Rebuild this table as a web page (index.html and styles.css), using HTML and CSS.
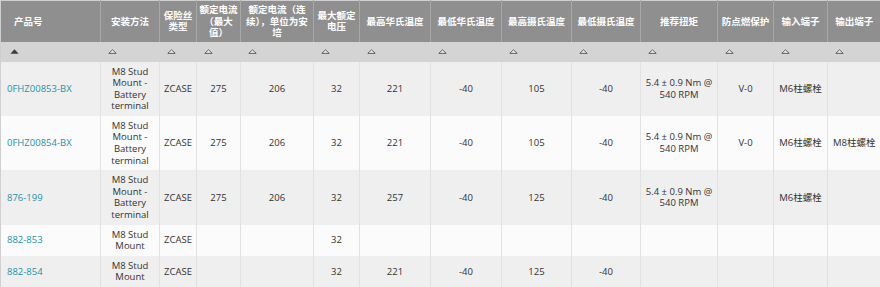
FILE: index.html
```html
<!DOCTYPE html>
<html lang="zh">
<head>
<meta charset="utf-8">
<title>产品表</title>
<link rel="stylesheet" href="styles.css">
</head>
<body>
<table class="grid">
  <colgroup>
    <col class="w100"><col class="w59"><col class="w37"><col class="w44"><col class="w73"><col class="w46"><col class="w71"><col class="w71"><col class="w70"><col class="w69"><col class="w77"><col class="w56"><col class="w54"><col class="w53">
  </colgroup>
  <thead>
    <tr class="head">
      <th class="first">产品号</th>
      <th>安装方法</th>
      <th>保险丝类型</th>
      <th>额定电流（最大值）</th>
      <th>额定电流（连续），单位为安培</th>
      <th>最大额定电压</th>
      <th>最高华氏温度</th>
      <th>最低华氏温度</th>
      <th>最高摄氏温度</th>
      <th>最低摄氏温度</th>
      <th>推荐扭矩</th>
      <th>防点燃保护</th>
      <th>输入端子</th>
      <th>输出端子</th>
    </tr>
    <tr class="sort">
      <td><svg class="arrow" width="9" height="5" viewBox="0 0 9 5"><path d="M4.5 0.3 L8.6 4.8 L0.4 4.8 Z" fill="#3c3c3c"/></svg></td>
      <td><svg class="arrow" width="9" height="5" viewBox="0 0 9 5"><path d="M4.5 0.8 L8.2 4.4 L0.8 4.4 Z" fill="#ececec" stroke="#505050" stroke-width="0.9"/></svg></td>
      <td><svg class="arrow" width="9" height="5" viewBox="0 0 9 5"><path d="M4.5 0.8 L8.2 4.4 L0.8 4.4 Z" fill="#ececec" stroke="#505050" stroke-width="0.9"/></svg></td>
      <td><svg class="arrow" width="9" height="5" viewBox="0 0 9 5"><path d="M4.5 0.8 L8.2 4.4 L0.8 4.4 Z" fill="#ececec" stroke="#505050" stroke-width="0.9"/></svg></td>
      <td><svg class="arrow" width="9" height="5" viewBox="0 0 9 5"><path d="M4.5 0.8 L8.2 4.4 L0.8 4.4 Z" fill="#ececec" stroke="#505050" stroke-width="0.9"/></svg></td>
      <td><svg class="arrow" width="9" height="5" viewBox="0 0 9 5"><path d="M4.5 0.8 L8.2 4.4 L0.8 4.4 Z" fill="#ececec" stroke="#505050" stroke-width="0.9"/></svg></td>
      <td><svg class="arrow" width="9" height="5" viewBox="0 0 9 5"><path d="M4.5 0.8 L8.2 4.4 L0.8 4.4 Z" fill="#ececec" stroke="#505050" stroke-width="0.9"/></svg></td>
      <td><svg class="arrow" width="9" height="5" viewBox="0 0 9 5"><path d="M4.5 0.8 L8.2 4.4 L0.8 4.4 Z" fill="#ececec" stroke="#505050" stroke-width="0.9"/></svg></td>
      <td><svg class="arrow" width="9" height="5" viewBox="0 0 9 5"><path d="M4.5 0.8 L8.2 4.4 L0.8 4.4 Z" fill="#ececec" stroke="#505050" stroke-width="0.9"/></svg></td>
      <td><svg class="arrow" width="9" height="5" viewBox="0 0 9 5"><path d="M4.5 0.8 L8.2 4.4 L0.8 4.4 Z" fill="#ececec" stroke="#505050" stroke-width="0.9"/></svg></td>
      <td><svg class="arrow" width="9" height="5" viewBox="0 0 9 5"><path d="M4.5 0.8 L8.2 4.4 L0.8 4.4 Z" fill="#ececec" stroke="#505050" stroke-width="0.9"/></svg></td>
      <td><svg class="arrow" width="9" height="5" viewBox="0 0 9 5"><path d="M4.5 0.8 L8.2 4.4 L0.8 4.4 Z" fill="#ececec" stroke="#505050" stroke-width="0.9"/></svg></td>
      <td><svg class="arrow" width="9" height="5" viewBox="0 0 9 5"><path d="M4.5 0.8 L8.2 4.4 L0.8 4.4 Z" fill="#ececec" stroke="#505050" stroke-width="0.9"/></svg></td>
      <td><svg class="arrow" width="9" height="5" viewBox="0 0 9 5"><path d="M4.5 0.8 L8.2 4.4 L0.8 4.4 Z" fill="#ececec" stroke="#505050" stroke-width="0.9"/></svg></td>
    </tr>
  </thead>
  <tbody>
    <tr class="odd">
      <td class="first"><a href="#">0FHZ00853-BX</a></td>
      <td>M8 Stud Mount - Battery terminal</td>
      <td>ZCASE</td>
      <td>275</td>
      <td>206</td>
      <td>32</td>
      <td>221</td>
      <td>-40</td>
      <td>105</td>
      <td>-40</td>
      <td>5.4 ± 0.9 Nm @ 540 RPM</td>
      <td>V-0</td>
      <td>M6柱螺栓</td>
      <td></td>
    </tr>
    <tr class="even">
      <td class="first"><a href="#">0FHZ00854-BX</a></td>
      <td>M8 Stud Mount - Battery terminal</td>
      <td>ZCASE</td>
      <td>275</td>
      <td>206</td>
      <td>32</td>
      <td>221</td>
      <td>-40</td>
      <td>105</td>
      <td>-40</td>
      <td>5.4 ± 0.9 Nm @ 540 RPM</td>
      <td>V-0</td>
      <td>M6柱螺栓</td>
      <td>M8柱螺栓</td>
    </tr>
    <tr class="odd">
      <td class="first"><a href="#">876-199</a></td>
      <td>M8 Stud Mount - Battery terminal</td>
      <td>ZCASE</td>
      <td>275</td>
      <td>206</td>
      <td>32</td>
      <td>257</td>
      <td>-40</td>
      <td>125</td>
      <td>-40</td>
      <td>5.4 ± 0.9 Nm @ 540 RPM</td>
      <td></td>
      <td>M6柱螺栓</td>
      <td></td>
    </tr>
    <tr class="even">
      <td class="first"><a href="#">882-853</a></td>
      <td>M8 Stud Mount</td>
      <td>ZCASE</td>
      <td></td>
      <td></td>
      <td>32</td>
      <td></td>
      <td></td>
      <td></td>
      <td></td>
      <td></td>
      <td></td>
      <td></td>
      <td></td>
    </tr>
    <tr class="odd">
      <td class="first"><a href="#">882-854</a></td>
      <td>M8 Stud Mount</td>
      <td>ZCASE</td>
      <td></td>
      <td></td>
      <td>32</td>
      <td>221</td>
      <td>-40</td>
      <td>125</td>
      <td>-40</td>
      <td></td>
      <td></td>
      <td></td>
      <td></td>
    </tr>
  </tbody>
</table>
</body>
</html>
```

FILE: styles.css
```css
html, body {
  margin: 0;
  padding: 0;
  background: #ffffff;
}

.grid {
  width: 880px;
  table-layout: fixed;
  border-collapse: collapse;
  border-spacing: 0;
  font-family: "Open Sans", "Noto Sans CJK SC", sans-serif;
  font-size: 9.5px;
  color: #333333;
  border-top: 1px solid #cfcfcf;
  border-left: 1px solid #cfcfcf;
}

.w100 { width: 100px; }
.w59 { width: 59px; }
.w37 { width: 37px; }
.w44 { width: 44px; }
.w73 { width: 73px; }
.w46 { width: 46px; }
.w71 { width: 71px; }
.w70 { width: 70px; }
.w69 { width: 69px; }
.w77 { width: 77px; }
.w56 { width: 56px; }
.w54 { width: 54px; }
.w53 { width: 53px; }

.head th {
  background: #8f8f8f;
  color: #ffffff;
  font-family: "Noto Sans CJK SC", "Open Sans", sans-serif;
  font-weight: bold;
  font-size: 9.5px;
  line-height: 11.5px;
  padding: 3px 2px;
  text-align: center;
  vertical-align: middle;
  border-left: 1px solid #a8a8a8;
}

.head th.first {
  text-align: left;
  padding-left: 13px;
  border-left: none;
}

.sort td {
  background: #d4d4d4;
  height: 20px;
  padding: 0 0 0 7px;
  vertical-align: middle;
  line-height: 0;
}

.sort td:first-child {
  padding-left: 9px;
}

.arrow {
  display: block;
}

tbody td {
  padding: 4px 3px;
  line-height: 11.6px;
  text-align: center;
  vertical-align: middle;
  border-left: 1px solid #e2e2e2;
}

tbody td.first {
  text-align: left;
  padding-left: 6px;
  border-left: none;
}

tbody tr.odd td {
  background: #efefef;
}

tbody tr.even td {
  background: #fbfbfb;
}

tbody a {
  color: #2a8fa9;
  text-decoration: none;
}
```
